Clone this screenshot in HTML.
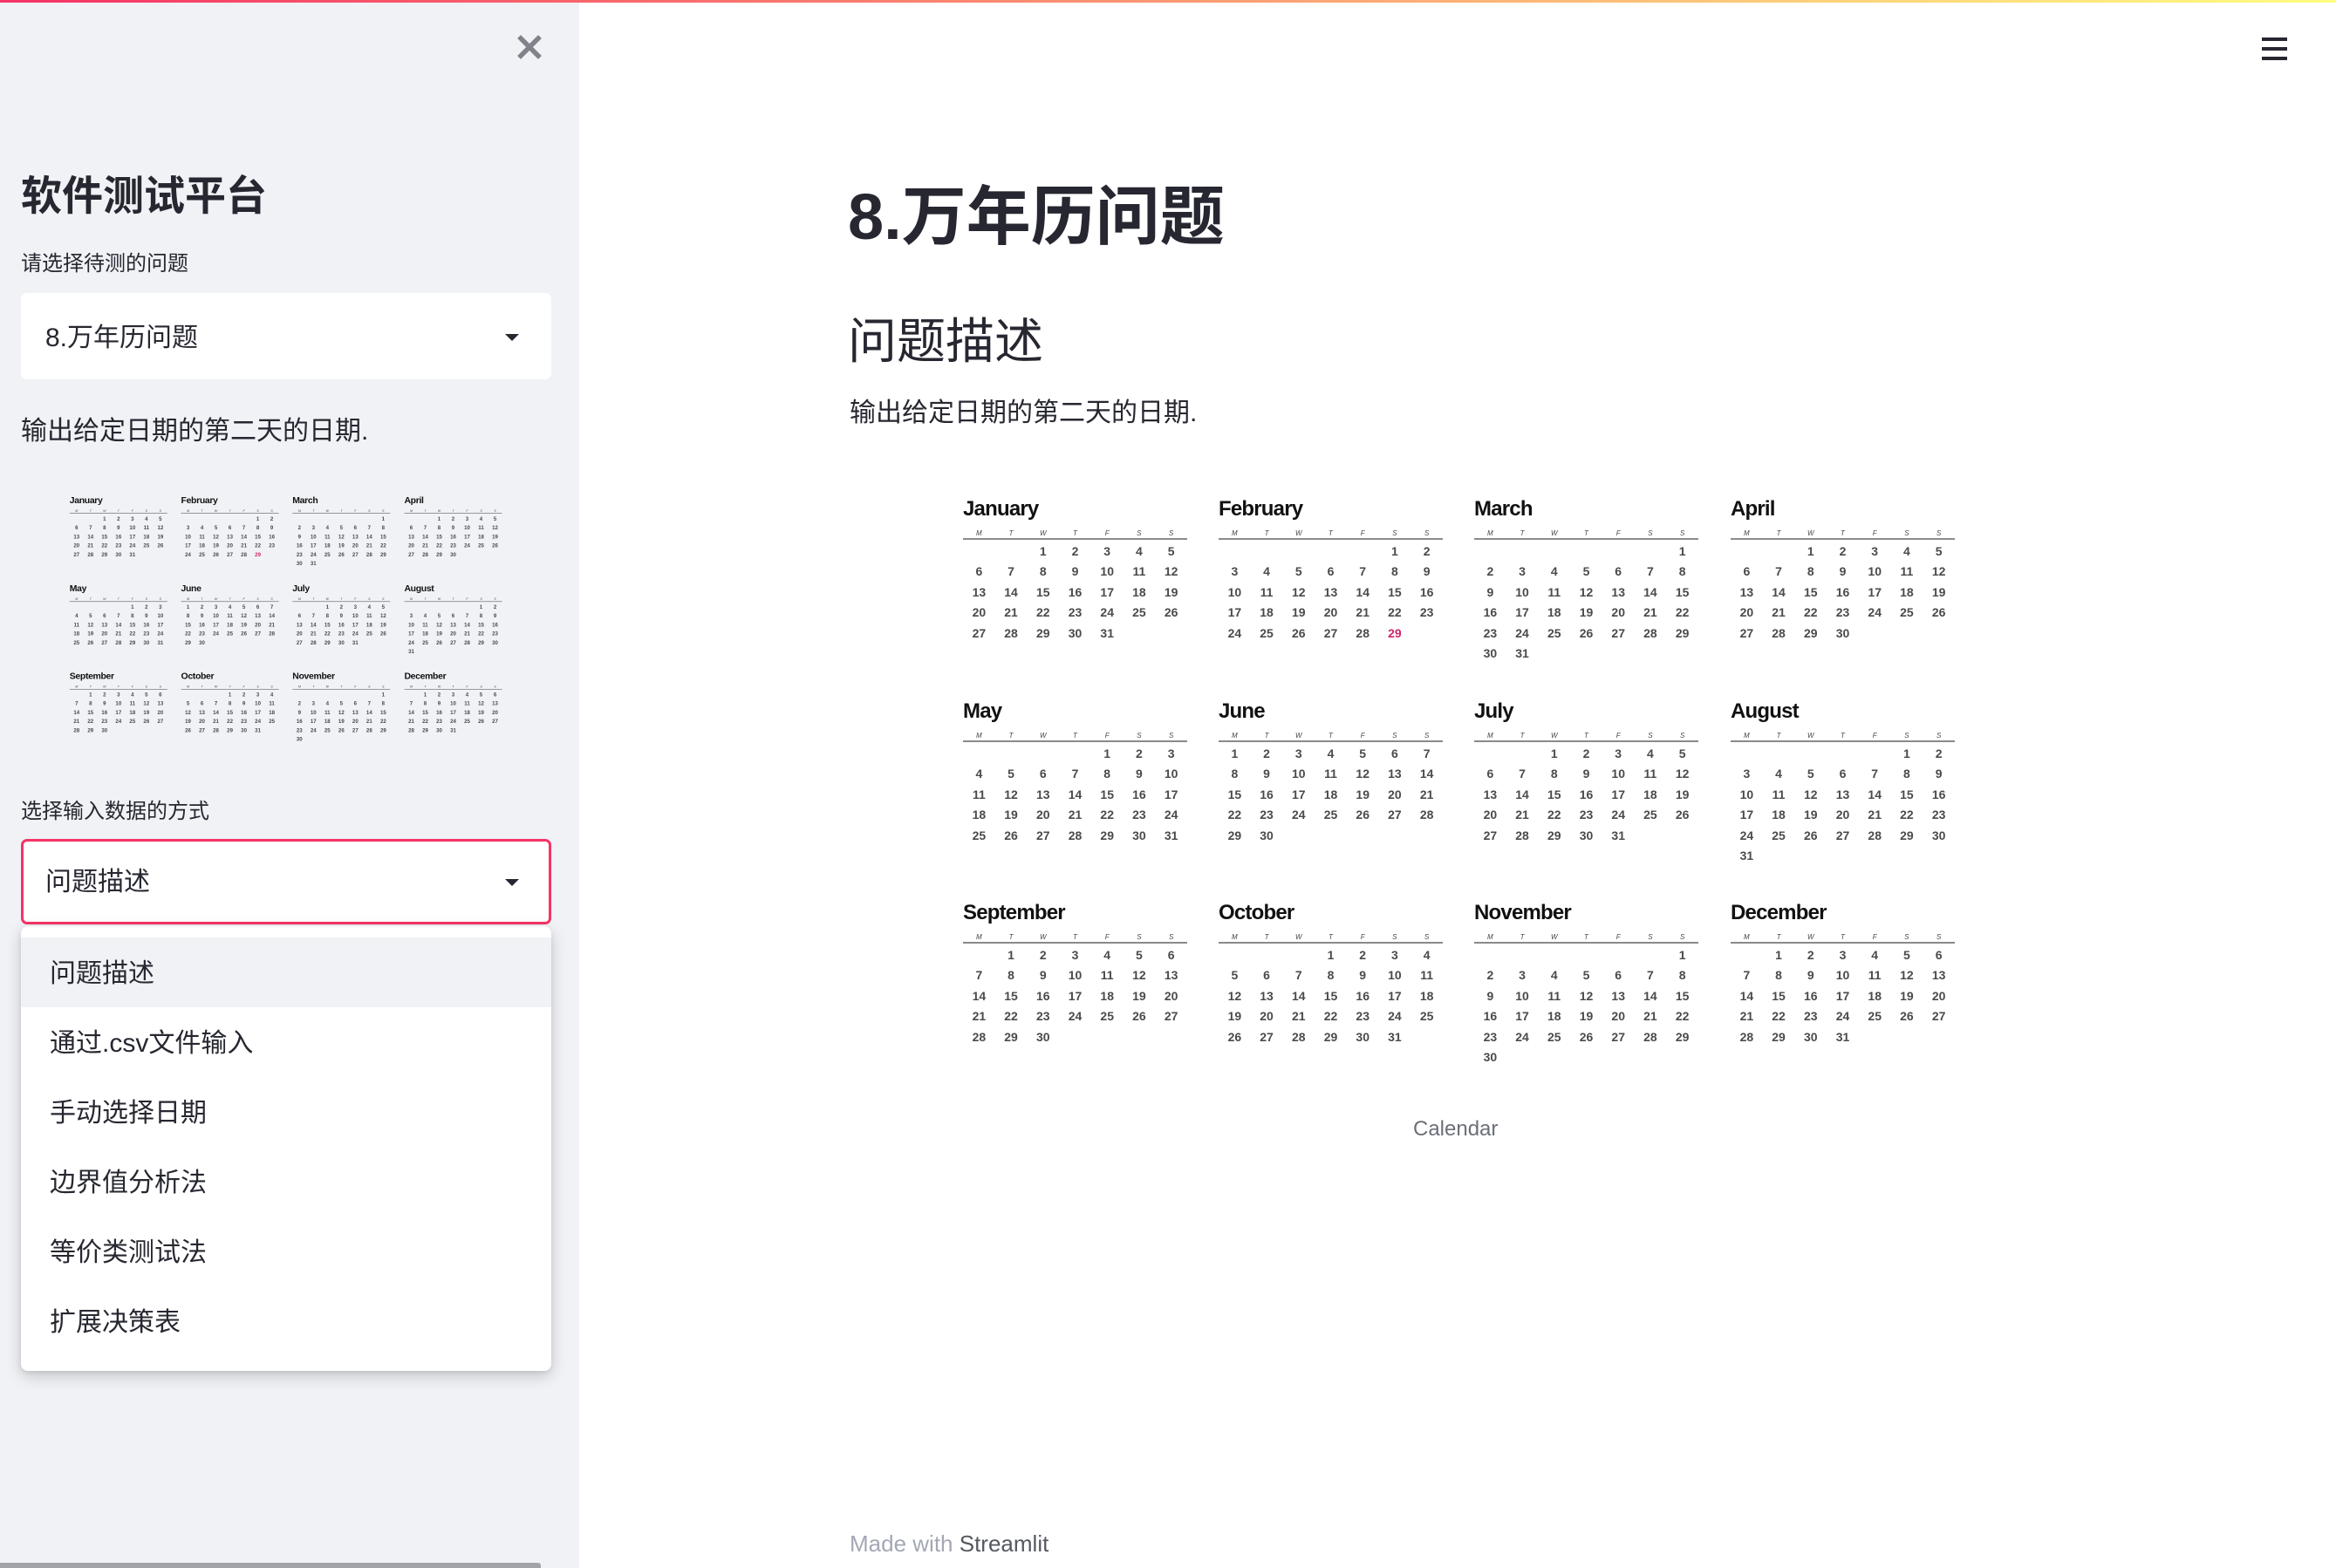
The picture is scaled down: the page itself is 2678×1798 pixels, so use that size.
<!DOCTYPE html>
<html><head><meta charset="utf-8"><style>
*{margin:0;padding:0;box-sizing:border-box}
body{width:2678px;height:1798px;position:relative;overflow:hidden;background:#fff;font-family:"Liberation Sans","Noto Sans CJK SC",sans-serif;color:#262730}
.topbar{position:absolute;left:0;top:0;width:2678px;height:3px;background:linear-gradient(90deg,#f63366,#fffd80);z-index:5}
.side{position:absolute;left:0;top:0;width:664px;height:1798px;background:#f0f2f6}
.abs{position:absolute;white-space:nowrap}
.sel{position:absolute;left:24px;width:608px;background:#fff;border-radius:7px}
.arrow{position:absolute;width:0;height:0;border-left:8px solid transparent;border-right:8px solid transparent;border-top:8px solid #262730}
.menu{position:absolute;left:24px;top:1062px;width:608px;height:510px;background:#fff;border-radius:8px;box-shadow:0 6px 18px rgba(0,0,0,.18),0 2px 6px rgba(0,0,0,.08);overflow:hidden}
.menu div{height:80px;line-height:84px;padding-left:33px;font-size:30px}
.cal{position:absolute;left:0;top:0;width:1160px;height:660px;font-family:"Liberation Sans Narrow","Liberation Sans",sans-serif}
.m{position:absolute;width:257px}
.m .t{height:28px;line-height:28px;font-size:24px;font-weight:bold;color:#111;font-family:"Liberation Sans",sans-serif;letter-spacing:-0.8px}
.m .h{position:absolute;top:37px;left:0;width:257px;display:grid;grid-template-columns:repeat(7,1fr);font-size:8px;color:#444;text-align:center}
.m .l{position:absolute;top:47px;left:0;width:257px;height:2px;background:#8a8a8a}
.m .d{position:absolute;top:51px;left:0;width:257px;display:grid;grid-template-columns:repeat(7,1fr);grid-auto-rows:23.4px;line-height:23.4px;font-size:14px;color:#4a4a4a;text-align:center}
.m .d b{font-weight:bold}
.red{color:#d0246a!important}
</style></head><body>
<div class="topbar"></div>
<div class="side">
  <svg class="abs" style="left:593px;top:40px" width="28" height="28" viewBox="0 0 28 28"><path d="M4 4L24 24M24 4L4 24" stroke="#808389" stroke-width="5.5" stroke-linecap="square"/></svg>
  <div class="abs" style="left:24px;top:193px;font-size:47px;font-weight:bold;line-height:64px">软件测试平台</div>
  <div class="abs" style="left:24px;top:288px;font-size:24px;line-height:30px">请选择待测的问题</div>
  <div class="sel" style="top:336px;height:99px"><div class="abs" style="left:28px;top:32px;font-size:30px;line-height:40px">8.万年历问题</div><div class="arrow" style="left:555px;top:47px"></div></div>
  <div class="abs" style="left:24px;top:475px;font-size:30px;line-height:40px">输出给定日期的第二天的日期.</div>
  <div class="abs" style="left:24px;top:915px;font-size:24px;line-height:32px">选择输入数据的方式</div>
  <div class="sel" style="top:962px;height:98px;border:3px solid #f63366"><div class="abs" style="left:25px;top:27px;font-size:30px;line-height:40px">问题描述</div><div class="arrow" style="left:552px;top:43px"></div></div>
  <div class="menu"><div style="margin-top:13px;background:#f0f2f6">问题描述</div><div>通过.csv文件输入</div><div>手动选择日期</div><div>边界值分析法</div><div>等价类测试法</div><div>扩展决策表</div></div>
  <div class="abs" style="left:0;top:1792px;width:620px;height:6px;background:#a3a3aa;border-radius:0 3px 0 0"></div>
</div>
<div class="abs" style="left:2593px;top:43px;width:29px;height:4px;background:#262730"></div>
<div class="abs" style="left:2593px;top:54px;width:29px;height:4px;background:#262730"></div>
<div class="abs" style="left:2593px;top:65px;width:29px;height:4px;background:#262730"></div>
<div class="abs" style="left:972px;top:202px;font-size:74px;font-weight:bold;line-height:94px">8.万年历问题</div>
<div class="abs" style="left:972px;top:357px;font-size:56px;line-height:70px">问题描述</div>
<div class="abs" style="left:974px;top:454px;font-size:30px;line-height:40px">输出给定日期的第二天的日期.</div>
<div class="abs" style="left:1093px;top:564px;width:1160px;height:660px">
<div class="cal">
<div class="m" style="left:11px;top:6px"><div class="t">January</div><div class="h"><i>M</i><i>T</i><i>W</i><i>T</i><i>F</i><i>S</i><i>S</i></div><div class="l"></div><div class="d"><i></i><i></i><b>1</b><b>2</b><b>3</b><b>4</b><b>5</b><b>6</b><b>7</b><b>8</b><b>9</b><b>10</b><b>11</b><b>12</b><b>13</b><b>14</b><b>15</b><b>16</b><b>17</b><b>18</b><b>19</b><b>20</b><b>21</b><b>22</b><b>23</b><b>24</b><b>25</b><b>26</b><b>27</b><b>28</b><b>29</b><b>30</b><b>31</b></div></div>
<div class="m" style="left:304px;top:6px"><div class="t">February</div><div class="h"><i>M</i><i>T</i><i>W</i><i>T</i><i>F</i><i>S</i><i>S</i></div><div class="l"></div><div class="d"><i></i><i></i><i></i><i></i><i></i><b>1</b><b>2</b><b>3</b><b>4</b><b>5</b><b>6</b><b>7</b><b>8</b><b>9</b><b>10</b><b>11</b><b>12</b><b>13</b><b>14</b><b>15</b><b>16</b><b>17</b><b>18</b><b>19</b><b>20</b><b>21</b><b>22</b><b>23</b><b>24</b><b>25</b><b>26</b><b>27</b><b>28</b><b class="red">29</b></div></div>
<div class="m" style="left:597px;top:6px"><div class="t">March</div><div class="h"><i>M</i><i>T</i><i>W</i><i>T</i><i>F</i><i>S</i><i>S</i></div><div class="l"></div><div class="d"><i></i><i></i><i></i><i></i><i></i><i></i><b>1</b><b>2</b><b>3</b><b>4</b><b>5</b><b>6</b><b>7</b><b>8</b><b>9</b><b>10</b><b>11</b><b>12</b><b>13</b><b>14</b><b>15</b><b>16</b><b>17</b><b>18</b><b>19</b><b>20</b><b>21</b><b>22</b><b>23</b><b>24</b><b>25</b><b>26</b><b>27</b><b>28</b><b>29</b><b>30</b><b>31</b></div></div>
<div class="m" style="left:891px;top:6px"><div class="t">April</div><div class="h"><i>M</i><i>T</i><i>W</i><i>T</i><i>F</i><i>S</i><i>S</i></div><div class="l"></div><div class="d"><i></i><i></i><b>1</b><b>2</b><b>3</b><b>4</b><b>5</b><b>6</b><b>7</b><b>8</b><b>9</b><b>10</b><b>11</b><b>12</b><b>13</b><b>14</b><b>15</b><b>16</b><b>17</b><b>18</b><b>19</b><b>20</b><b>21</b><b>22</b><b>23</b><b>24</b><b>25</b><b>26</b><b>27</b><b>28</b><b>29</b><b>30</b></div></div>
<div class="m" style="left:11px;top:238px"><div class="t">May</div><div class="h"><i>M</i><i>T</i><i>W</i><i>T</i><i>F</i><i>S</i><i>S</i></div><div class="l"></div><div class="d"><i></i><i></i><i></i><i></i><b>1</b><b>2</b><b>3</b><b>4</b><b>5</b><b>6</b><b>7</b><b>8</b><b>9</b><b>10</b><b>11</b><b>12</b><b>13</b><b>14</b><b>15</b><b>16</b><b>17</b><b>18</b><b>19</b><b>20</b><b>21</b><b>22</b><b>23</b><b>24</b><b>25</b><b>26</b><b>27</b><b>28</b><b>29</b><b>30</b><b>31</b></div></div>
<div class="m" style="left:304px;top:238px"><div class="t">June</div><div class="h"><i>M</i><i>T</i><i>W</i><i>T</i><i>F</i><i>S</i><i>S</i></div><div class="l"></div><div class="d"><b>1</b><b>2</b><b>3</b><b>4</b><b>5</b><b>6</b><b>7</b><b>8</b><b>9</b><b>10</b><b>11</b><b>12</b><b>13</b><b>14</b><b>15</b><b>16</b><b>17</b><b>18</b><b>19</b><b>20</b><b>21</b><b>22</b><b>23</b><b>24</b><b>25</b><b>26</b><b>27</b><b>28</b><b>29</b><b>30</b></div></div>
<div class="m" style="left:597px;top:238px"><div class="t">July</div><div class="h"><i>M</i><i>T</i><i>W</i><i>T</i><i>F</i><i>S</i><i>S</i></div><div class="l"></div><div class="d"><i></i><i></i><b>1</b><b>2</b><b>3</b><b>4</b><b>5</b><b>6</b><b>7</b><b>8</b><b>9</b><b>10</b><b>11</b><b>12</b><b>13</b><b>14</b><b>15</b><b>16</b><b>17</b><b>18</b><b>19</b><b>20</b><b>21</b><b>22</b><b>23</b><b>24</b><b>25</b><b>26</b><b>27</b><b>28</b><b>29</b><b>30</b><b>31</b></div></div>
<div class="m" style="left:891px;top:238px"><div class="t">August</div><div class="h"><i>M</i><i>T</i><i>W</i><i>T</i><i>F</i><i>S</i><i>S</i></div><div class="l"></div><div class="d"><i></i><i></i><i></i><i></i><i></i><b>1</b><b>2</b><b>3</b><b>4</b><b>5</b><b>6</b><b>7</b><b>8</b><b>9</b><b>10</b><b>11</b><b>12</b><b>13</b><b>14</b><b>15</b><b>16</b><b>17</b><b>18</b><b>19</b><b>20</b><b>21</b><b>22</b><b>23</b><b>24</b><b>25</b><b>26</b><b>27</b><b>28</b><b>29</b><b>30</b><b>31</b></div></div>
<div class="m" style="left:11px;top:469px"><div class="t">September</div><div class="h"><i>M</i><i>T</i><i>W</i><i>T</i><i>F</i><i>S</i><i>S</i></div><div class="l"></div><div class="d"><i></i><b>1</b><b>2</b><b>3</b><b>4</b><b>5</b><b>6</b><b>7</b><b>8</b><b>9</b><b>10</b><b>11</b><b>12</b><b>13</b><b>14</b><b>15</b><b>16</b><b>17</b><b>18</b><b>19</b><b>20</b><b>21</b><b>22</b><b>23</b><b>24</b><b>25</b><b>26</b><b>27</b><b>28</b><b>29</b><b>30</b></div></div>
<div class="m" style="left:304px;top:469px"><div class="t">October</div><div class="h"><i>M</i><i>T</i><i>W</i><i>T</i><i>F</i><i>S</i><i>S</i></div><div class="l"></div><div class="d"><i></i><i></i><i></i><b>1</b><b>2</b><b>3</b><b>4</b><b>5</b><b>6</b><b>7</b><b>8</b><b>9</b><b>10</b><b>11</b><b>12</b><b>13</b><b>14</b><b>15</b><b>16</b><b>17</b><b>18</b><b>19</b><b>20</b><b>21</b><b>22</b><b>23</b><b>24</b><b>25</b><b>26</b><b>27</b><b>28</b><b>29</b><b>30</b><b>31</b></div></div>
<div class="m" style="left:597px;top:469px"><div class="t">November</div><div class="h"><i>M</i><i>T</i><i>W</i><i>T</i><i>F</i><i>S</i><i>S</i></div><div class="l"></div><div class="d"><i></i><i></i><i></i><i></i><i></i><i></i><b>1</b><b>2</b><b>3</b><b>4</b><b>5</b><b>6</b><b>7</b><b>8</b><b>9</b><b>10</b><b>11</b><b>12</b><b>13</b><b>14</b><b>15</b><b>16</b><b>17</b><b>18</b><b>19</b><b>20</b><b>21</b><b>22</b><b>23</b><b>24</b><b>25</b><b>26</b><b>27</b><b>28</b><b>29</b><b>30</b></div></div>
<div class="m" style="left:891px;top:469px"><div class="t">December</div><div class="h"><i>M</i><i>T</i><i>W</i><i>T</i><i>F</i><i>S</i><i>S</i></div><div class="l"></div><div class="d"><i></i><b>1</b><b>2</b><b>3</b><b>4</b><b>5</b><b>6</b><b>7</b><b>8</b><b>9</b><b>10</b><b>11</b><b>12</b><b>13</b><b>14</b><b>15</b><b>16</b><b>17</b><b>18</b><b>19</b><b>20</b><b>21</b><b>22</b><b>23</b><b>24</b><b>25</b><b>26</b><b>27</b><b>28</b><b>29</b><b>30</b><b>31</b></div></div>
</div>
</div>
<div class="abs" style="left:75px;top:565px;width:1160px;height:660px;transform:scale(0.436);transform-origin:0 0">
<div class="cal">
<div class="m" style="left:11px;top:6px"><div class="t">January</div><div class="h"><i>M</i><i>T</i><i>W</i><i>T</i><i>F</i><i>S</i><i>S</i></div><div class="l"></div><div class="d"><i></i><i></i><b>1</b><b>2</b><b>3</b><b>4</b><b>5</b><b>6</b><b>7</b><b>8</b><b>9</b><b>10</b><b>11</b><b>12</b><b>13</b><b>14</b><b>15</b><b>16</b><b>17</b><b>18</b><b>19</b><b>20</b><b>21</b><b>22</b><b>23</b><b>24</b><b>25</b><b>26</b><b>27</b><b>28</b><b>29</b><b>30</b><b>31</b></div></div>
<div class="m" style="left:304px;top:6px"><div class="t">February</div><div class="h"><i>M</i><i>T</i><i>W</i><i>T</i><i>F</i><i>S</i><i>S</i></div><div class="l"></div><div class="d"><i></i><i></i><i></i><i></i><i></i><b>1</b><b>2</b><b>3</b><b>4</b><b>5</b><b>6</b><b>7</b><b>8</b><b>9</b><b>10</b><b>11</b><b>12</b><b>13</b><b>14</b><b>15</b><b>16</b><b>17</b><b>18</b><b>19</b><b>20</b><b>21</b><b>22</b><b>23</b><b>24</b><b>25</b><b>26</b><b>27</b><b>28</b><b class="red">29</b></div></div>
<div class="m" style="left:597px;top:6px"><div class="t">March</div><div class="h"><i>M</i><i>T</i><i>W</i><i>T</i><i>F</i><i>S</i><i>S</i></div><div class="l"></div><div class="d"><i></i><i></i><i></i><i></i><i></i><i></i><b>1</b><b>2</b><b>3</b><b>4</b><b>5</b><b>6</b><b>7</b><b>8</b><b>9</b><b>10</b><b>11</b><b>12</b><b>13</b><b>14</b><b>15</b><b>16</b><b>17</b><b>18</b><b>19</b><b>20</b><b>21</b><b>22</b><b>23</b><b>24</b><b>25</b><b>26</b><b>27</b><b>28</b><b>29</b><b>30</b><b>31</b></div></div>
<div class="m" style="left:891px;top:6px"><div class="t">April</div><div class="h"><i>M</i><i>T</i><i>W</i><i>T</i><i>F</i><i>S</i><i>S</i></div><div class="l"></div><div class="d"><i></i><i></i><b>1</b><b>2</b><b>3</b><b>4</b><b>5</b><b>6</b><b>7</b><b>8</b><b>9</b><b>10</b><b>11</b><b>12</b><b>13</b><b>14</b><b>15</b><b>16</b><b>17</b><b>18</b><b>19</b><b>20</b><b>21</b><b>22</b><b>23</b><b>24</b><b>25</b><b>26</b><b>27</b><b>28</b><b>29</b><b>30</b></div></div>
<div class="m" style="left:11px;top:238px"><div class="t">May</div><div class="h"><i>M</i><i>T</i><i>W</i><i>T</i><i>F</i><i>S</i><i>S</i></div><div class="l"></div><div class="d"><i></i><i></i><i></i><i></i><b>1</b><b>2</b><b>3</b><b>4</b><b>5</b><b>6</b><b>7</b><b>8</b><b>9</b><b>10</b><b>11</b><b>12</b><b>13</b><b>14</b><b>15</b><b>16</b><b>17</b><b>18</b><b>19</b><b>20</b><b>21</b><b>22</b><b>23</b><b>24</b><b>25</b><b>26</b><b>27</b><b>28</b><b>29</b><b>30</b><b>31</b></div></div>
<div class="m" style="left:304px;top:238px"><div class="t">June</div><div class="h"><i>M</i><i>T</i><i>W</i><i>T</i><i>F</i><i>S</i><i>S</i></div><div class="l"></div><div class="d"><b>1</b><b>2</b><b>3</b><b>4</b><b>5</b><b>6</b><b>7</b><b>8</b><b>9</b><b>10</b><b>11</b><b>12</b><b>13</b><b>14</b><b>15</b><b>16</b><b>17</b><b>18</b><b>19</b><b>20</b><b>21</b><b>22</b><b>23</b><b>24</b><b>25</b><b>26</b><b>27</b><b>28</b><b>29</b><b>30</b></div></div>
<div class="m" style="left:597px;top:238px"><div class="t">July</div><div class="h"><i>M</i><i>T</i><i>W</i><i>T</i><i>F</i><i>S</i><i>S</i></div><div class="l"></div><div class="d"><i></i><i></i><b>1</b><b>2</b><b>3</b><b>4</b><b>5</b><b>6</b><b>7</b><b>8</b><b>9</b><b>10</b><b>11</b><b>12</b><b>13</b><b>14</b><b>15</b><b>16</b><b>17</b><b>18</b><b>19</b><b>20</b><b>21</b><b>22</b><b>23</b><b>24</b><b>25</b><b>26</b><b>27</b><b>28</b><b>29</b><b>30</b><b>31</b></div></div>
<div class="m" style="left:891px;top:238px"><div class="t">August</div><div class="h"><i>M</i><i>T</i><i>W</i><i>T</i><i>F</i><i>S</i><i>S</i></div><div class="l"></div><div class="d"><i></i><i></i><i></i><i></i><i></i><b>1</b><b>2</b><b>3</b><b>4</b><b>5</b><b>6</b><b>7</b><b>8</b><b>9</b><b>10</b><b>11</b><b>12</b><b>13</b><b>14</b><b>15</b><b>16</b><b>17</b><b>18</b><b>19</b><b>20</b><b>21</b><b>22</b><b>23</b><b>24</b><b>25</b><b>26</b><b>27</b><b>28</b><b>29</b><b>30</b><b>31</b></div></div>
<div class="m" style="left:11px;top:469px"><div class="t">September</div><div class="h"><i>M</i><i>T</i><i>W</i><i>T</i><i>F</i><i>S</i><i>S</i></div><div class="l"></div><div class="d"><i></i><b>1</b><b>2</b><b>3</b><b>4</b><b>5</b><b>6</b><b>7</b><b>8</b><b>9</b><b>10</b><b>11</b><b>12</b><b>13</b><b>14</b><b>15</b><b>16</b><b>17</b><b>18</b><b>19</b><b>20</b><b>21</b><b>22</b><b>23</b><b>24</b><b>25</b><b>26</b><b>27</b><b>28</b><b>29</b><b>30</b></div></div>
<div class="m" style="left:304px;top:469px"><div class="t">October</div><div class="h"><i>M</i><i>T</i><i>W</i><i>T</i><i>F</i><i>S</i><i>S</i></div><div class="l"></div><div class="d"><i></i><i></i><i></i><b>1</b><b>2</b><b>3</b><b>4</b><b>5</b><b>6</b><b>7</b><b>8</b><b>9</b><b>10</b><b>11</b><b>12</b><b>13</b><b>14</b><b>15</b><b>16</b><b>17</b><b>18</b><b>19</b><b>20</b><b>21</b><b>22</b><b>23</b><b>24</b><b>25</b><b>26</b><b>27</b><b>28</b><b>29</b><b>30</b><b>31</b></div></div>
<div class="m" style="left:597px;top:469px"><div class="t">November</div><div class="h"><i>M</i><i>T</i><i>W</i><i>T</i><i>F</i><i>S</i><i>S</i></div><div class="l"></div><div class="d"><i></i><i></i><i></i><i></i><i></i><i></i><b>1</b><b>2</b><b>3</b><b>4</b><b>5</b><b>6</b><b>7</b><b>8</b><b>9</b><b>10</b><b>11</b><b>12</b><b>13</b><b>14</b><b>15</b><b>16</b><b>17</b><b>18</b><b>19</b><b>20</b><b>21</b><b>22</b><b>23</b><b>24</b><b>25</b><b>26</b><b>27</b><b>28</b><b>29</b><b>30</b></div></div>
<div class="m" style="left:891px;top:469px"><div class="t">December</div><div class="h"><i>M</i><i>T</i><i>W</i><i>T</i><i>F</i><i>S</i><i>S</i></div><div class="l"></div><div class="d"><i></i><b>1</b><b>2</b><b>3</b><b>4</b><b>5</b><b>6</b><b>7</b><b>8</b><b>9</b><b>10</b><b>11</b><b>12</b><b>13</b><b>14</b><b>15</b><b>16</b><b>17</b><b>18</b><b>19</b><b>20</b><b>21</b><b>22</b><b>23</b><b>24</b><b>25</b><b>26</b><b>27</b><b>28</b><b>29</b><b>30</b><b>31</b></div></div>
</div>
</div>
<div class="abs" style="left:1620px;top:1280px;font-size:24px;line-height:30px;color:#6b6f78">Calendar</div>
<div class="abs" style="left:974px;top:1754px;font-size:26px;line-height:32px;color:#a3a8b4">Made with <span style="color:#555860">Streamlit</span></div>
</body></html>
